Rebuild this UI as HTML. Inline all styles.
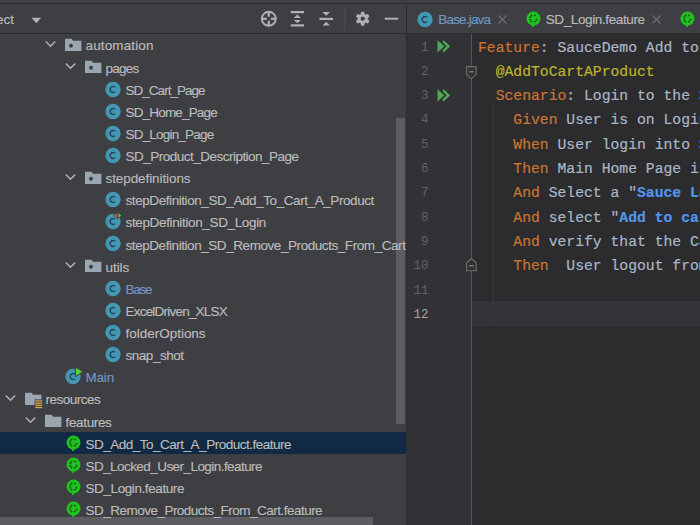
<!DOCTYPE html>
<html><head><meta charset="utf-8"><style>
html,body{margin:0;padding:0;width:700px;height:525px;overflow:hidden;background:#3E3F43}
.ic{position:absolute;overflow:visible}
.t{position:absolute;font-family:"Liberation Sans",sans-serif;font-size:13.5px;line-height:22px;white-space:nowrap;-webkit-text-stroke:0.15px}
.cl{position:absolute;left:478px;font-family:"Liberation Mono",monospace;font-size:14.72px;line-height:24px;white-space:nowrap;-webkit-text-stroke:0.2px}
.ln{position:absolute;left:407px;width:21.5px;text-align:right;font-family:"Liberation Mono",monospace;font-size:12.5px;line-height:24px}
</style></head><body>
<div style="position:absolute;left:0;top:3px;width:700px;height:1px;background:#2D2D30"></div>
<div style="position:absolute;left:0;top:33px;width:700px;height:1px;background:#2D2D30"></div>
<div style="position:absolute;left:406px;top:4px;width:1px;height:521px;background:#2D2D30"></div>
<!-- project header -->

<svg class="ic" style="left:0;top:0" width="700" height="34" viewBox="0 0 700 34">
 <g fill="#AFB1B3">
  <circle cx="268.8" cy="18.8" r="7" fill="none" stroke="#AFB1B3" stroke-width="1.9"/>
  <rect x="267.7" y="11.5" width="2.2" height="5.3"/><rect x="267.7" y="20.8" width="2.2" height="5.3"/>
  <rect x="261.5" y="17.7" width="5.3" height="2.2"/><rect x="270.8" y="17.7" width="5.3" height="2.2"/>
  <rect x="290.8" y="11" width="13.2" height="2.2"/><rect x="290.8" y="24.3" width="13.2" height="2.2"/>
  <path d="M293.8 18 L297.35 14.6 L300.9 18 Z"/><path d="M293.8 19.9 L297.35 23.2 L300.9 19.9 Z"/>
  <rect x="319.4" y="17.8" width="13.6" height="2.2"/>
  <path d="M322.5 12 L329.9 12 L326.2 15.8 Z"/><path d="M322.5 25.6 L329.9 25.6 L326.2 21.8 Z"/>
  <rect x="384.8" y="17.7" width="13.4" height="2"/>
 </g>
 <rect x="344.3" y="8" width="1" height="23" fill="#4E5052"/>
 <g transform="translate(362.7 18.7)">
  <path fill="#AFB1B3" fill-rule="evenodd" d="M-2.03 -4.57 L-1.48 -6.94 L1.48 -6.94 L2.03 -4.57 L2.94 -4.05 L5.28 -4.75 L6.75 -2.19 L4.97 -0.52 L4.97 0.52 L6.75 2.19 L5.28 4.75 L2.94 4.05 L2.03 4.57 L1.48 6.94 L-1.48 6.94 L-2.03 4.57 L-2.94 4.05 L-5.28 4.75 L-6.75 2.19 L-4.97 0.52 L-4.97 -0.52 L-6.75 -2.19 L-5.28 -4.75 L-2.94 -4.05 Z M2.1 0 A2.1 2.1 0 1 0 -2.1 0 A2.1 2.1 0 1 0 2.1 0 Z"/>
 </g>
</svg>

<div class="t" style="right:686px;top:9px;color:#BBBBBB">Project</div>
<svg class="ic" style="left:31px;top:17px" width="11" height="7" viewBox="0 0 11 7"><path d="M0.5 0.8 H10.2 L5.35 6.3 Z" fill="#AFB1B3"/></svg>
<div style="position:absolute;left:396px;top:118px;width:9px;height:306px;background:#5D5D61"></div>
<div style="position:absolute;left:0;top:517px;width:373px;height:8px;background:#5D5D61"></div>
<div id="tree" style="position:absolute;left:0;top:34px;width:406px;height:491px;overflow:hidden">
<div style="position:absolute;left:0;top:-34px;width:406px;height:525px">
<svg class="ic" style="left:45px;top:36.2125px" width="12" height="16" viewBox="0 0 12 16"><path d="M0.8 5.5 L5.5 10.2 L10.2 5.5" fill="none" stroke="#AEB0B2" stroke-width="1.6"/></svg><svg class="ic" style="left:65px;top:36.2125px" width="18" height="18" viewBox="0 0 18 18"><path d="M0 2.8 H6.6 L8 4.7 H16.4 V15.1 H0 Z" fill="#9AA7B0"/><circle cx="6" cy="9.7" r="2" fill="#3E3F43"/></svg><div class="t" style="left:85.5px;top:35.45px;color:#BBBBBB;letter-spacing:0.130px">automation</div><svg class="ic" style="left:65px;top:58.3375px" width="12" height="16" viewBox="0 0 12 16"><path d="M0.8 5.5 L5.5 10.2 L10.2 5.5" fill="none" stroke="#AEB0B2" stroke-width="1.6"/></svg><svg class="ic" style="left:85px;top:58.3375px" width="18" height="18" viewBox="0 0 18 18"><path d="M0 2.8 H6.6 L8 4.7 H16.4 V15.1 H0 Z" fill="#9AA7B0"/><circle cx="6" cy="9.7" r="2" fill="#3E3F43"/></svg><div class="t" style="left:105.5px;top:57.58px;color:#BBBBBB;letter-spacing:-0.739px">pages</div><svg class="ic" style="left:105px;top:80.5625px" width="18" height="18" viewBox="0 0 18 18"><circle cx="8" cy="8.5" r="7.7" fill="#4297B4"/><path d="M10.04 6.34 A2.9 2.9 0 1 0 10.04 10.66" fill="none" stroke="#2D4655" stroke-width="1.4"/></svg><div class="t" style="left:125.5px;top:79.70px;color:#BBBBBB;letter-spacing:-0.976px">SD_Cart_Page</div><svg class="ic" style="left:105px;top:102.6875px" width="18" height="18" viewBox="0 0 18 18"><circle cx="8" cy="8.5" r="7.7" fill="#4297B4"/><path d="M10.04 6.34 A2.9 2.9 0 1 0 10.04 10.66" fill="none" stroke="#2D4655" stroke-width="1.4"/></svg><div class="t" style="left:125.5px;top:101.83px;color:#BBBBBB;letter-spacing:-0.826px">SD_Home_Page</div><svg class="ic" style="left:105px;top:124.8125px" width="18" height="18" viewBox="0 0 18 18"><circle cx="8" cy="8.5" r="7.7" fill="#4297B4"/><path d="M10.04 6.34 A2.9 2.9 0 1 0 10.04 10.66" fill="none" stroke="#2D4655" stroke-width="1.4"/></svg><div class="t" style="left:125.5px;top:123.95px;color:#BBBBBB;letter-spacing:-0.803px">SD_Login_Page</div><svg class="ic" style="left:105px;top:146.9375px" width="18" height="18" viewBox="0 0 18 18"><circle cx="8" cy="8.5" r="7.7" fill="#4297B4"/><path d="M10.04 6.34 A2.9 2.9 0 1 0 10.04 10.66" fill="none" stroke="#2D4655" stroke-width="1.4"/></svg><div class="t" style="left:125.5px;top:146.07px;color:#BBBBBB;letter-spacing:-0.510px">SD_Product_Description_Page</div><svg class="ic" style="left:65px;top:168.9625px" width="12" height="16" viewBox="0 0 12 16"><path d="M0.8 5.5 L5.5 10.2 L10.2 5.5" fill="none" stroke="#AEB0B2" stroke-width="1.6"/></svg><svg class="ic" style="left:85px;top:168.9625px" width="18" height="18" viewBox="0 0 18 18"><path d="M0 2.8 H6.6 L8 4.7 H16.4 V15.1 H0 Z" fill="#9AA7B0"/><circle cx="6" cy="9.7" r="2" fill="#3E3F43"/></svg><div class="t" style="left:105.5px;top:168.20px;color:#BBBBBB;letter-spacing:-0.087px">stepdefinitions</div><svg class="ic" style="left:105px;top:191.1875px" width="18" height="18" viewBox="0 0 18 18"><circle cx="8" cy="8.5" r="7.7" fill="#4297B4"/><path d="M10.04 6.34 A2.9 2.9 0 1 0 10.04 10.66" fill="none" stroke="#2D4655" stroke-width="1.4"/></svg><div class="t" style="left:125.5px;top:190.32px;color:#BBBBBB;letter-spacing:-0.424px">stepDefinition_SD_Add_To_Cart_A_Product</div><svg class="ic" style="left:105px;top:213.3125px" width="18" height="18" viewBox="0 0 18 18"><circle cx="8" cy="8.5" r="7.7" fill="#4297B4"/><path d="M10.04 6.34 A2.9 2.9 0 1 0 10.04 10.66" fill="none" stroke="#2D4655" stroke-width="1.4"/><path d="M12.3 -0.6 L8.6 2.4 L12.3 5.6 Z" fill="#E0652E" stroke="#3E3F43" stroke-width="0.9"/><path d="M12.9 -0.6 L16.8 2.4 L12.9 5.6 Z" fill="#5CC640" stroke="#3E3F43" stroke-width="0.9"/></svg><div class="t" style="left:125.5px;top:212.45px;color:#BBBBBB;letter-spacing:-0.353px">stepDefinition_SD_Login</div><svg class="ic" style="left:105px;top:235.4375px" width="18" height="18" viewBox="0 0 18 18"><circle cx="8" cy="8.5" r="7.7" fill="#4297B4"/><path d="M10.04 6.34 A2.9 2.9 0 1 0 10.04 10.66" fill="none" stroke="#2D4655" stroke-width="1.4"/></svg><div class="t" style="left:125.5px;top:234.57px;color:#BBBBBB;letter-spacing:-0.434px">stepDefinition_SD_Remove_Products_From_Cart</div><svg class="ic" style="left:65px;top:257.4625px" width="12" height="16" viewBox="0 0 12 16"><path d="M0.8 5.5 L5.5 10.2 L10.2 5.5" fill="none" stroke="#AEB0B2" stroke-width="1.6"/></svg><svg class="ic" style="left:85px;top:257.4625px" width="18" height="18" viewBox="0 0 18 18"><path d="M0 2.8 H6.6 L8 4.7 H16.4 V15.1 H0 Z" fill="#9AA7B0"/><circle cx="6" cy="9.7" r="2" fill="#3E3F43"/></svg><div class="t" style="left:105.5px;top:256.70px;color:#BBBBBB;letter-spacing:-0.063px">utils</div><svg class="ic" style="left:105px;top:279.6875px" width="18" height="18" viewBox="0 0 18 18"><circle cx="8" cy="8.5" r="7.7" fill="#4297B4"/><path d="M10.04 6.34 A2.9 2.9 0 1 0 10.04 10.66" fill="none" stroke="#2D4655" stroke-width="1.4"/></svg><div class="t" style="left:125.5px;top:278.82px;color:#7196C4;letter-spacing:-1.220px">Base</div><svg class="ic" style="left:105px;top:301.8125px" width="18" height="18" viewBox="0 0 18 18"><circle cx="8" cy="8.5" r="7.7" fill="#4297B4"/><path d="M10.04 6.34 A2.9 2.9 0 1 0 10.04 10.66" fill="none" stroke="#2D4655" stroke-width="1.4"/></svg><div class="t" style="left:125.5px;top:300.95px;color:#BBBBBB;letter-spacing:-0.785px">ExcelDriven_XLSX</div><svg class="ic" style="left:105px;top:323.9375px" width="18" height="18" viewBox="0 0 18 18"><circle cx="8" cy="8.5" r="7.7" fill="#4297B4"/><path d="M10.04 6.34 A2.9 2.9 0 1 0 10.04 10.66" fill="none" stroke="#2D4655" stroke-width="1.4"/></svg><div class="t" style="left:125.5px;top:323.07px;color:#BBBBBB;letter-spacing:-0.015px">folderOptions</div><svg class="ic" style="left:105px;top:346.0625px" width="18" height="18" viewBox="0 0 18 18"><circle cx="8" cy="8.5" r="7.7" fill="#4297B4"/><path d="M10.04 6.34 A2.9 2.9 0 1 0 10.04 10.66" fill="none" stroke="#2D4655" stroke-width="1.4"/></svg><div class="t" style="left:125.5px;top:345.20px;color:#BBBBBB;letter-spacing:-0.468px">snap_shot</div><svg class="ic" style="left:65px;top:368.1875px" width="18" height="18" viewBox="0 0 18 18"><circle cx="8" cy="8.5" r="7.7" fill="#4297B4"/><path d="M10.04 6.34 A2.9 2.9 0 1 0 10.04 10.66" fill="none" stroke="#2D4655" stroke-width="1.4"/><path d="M10.5 -1 L17.9 3.8 L10.5 8.6 Z" fill="#5FCF3A" stroke="#3E3F43" stroke-width="1" stroke-linejoin="round"/></svg><div class="t" style="left:85.5px;top:367.32px;color:#7196C4;letter-spacing:-0.191px">Main</div><svg class="ic" style="left:5px;top:390.2125px" width="12" height="16" viewBox="0 0 12 16"><path d="M0.8 5.5 L5.5 10.2 L10.2 5.5" fill="none" stroke="#AEB0B2" stroke-width="1.6"/></svg><svg class="ic" style="left:25px;top:390.2125px" width="18" height="18" viewBox="0 0 18 18"><path d="M0 2.8 H6.6 L8 4.7 H16.4 V15.1 H0 Z" fill="#9AA7B0"/><rect x="9.6" y="9.4" width="8" height="9" fill="#3E3F43"/><rect x="10.2" y="10.3" width="7" height="1.25" fill="#E0A640"/><rect x="10.2" y="12.5" width="7" height="1.25" fill="#E0A640"/><rect x="10.2" y="14.700000000000001" width="7" height="1.25" fill="#E0A640"/><rect x="10.2" y="16.900000000000002" width="7" height="1.25" fill="#E0A640"/></svg><div class="t" style="left:45.5px;top:389.45px;color:#BBBBBB;letter-spacing:-0.498px">resources</div><svg class="ic" style="left:25px;top:412.3375px" width="12" height="16" viewBox="0 0 12 16"><path d="M0.8 5.5 L5.5 10.2 L10.2 5.5" fill="none" stroke="#AEB0B2" stroke-width="1.6"/></svg><svg class="ic" style="left:45px;top:412.3375px" width="18" height="18" viewBox="0 0 18 18"><path d="M0 2.8 H6.6 L8 4.7 H16.4 V15.1 H0 Z" fill="#9AA7B0"/></svg><div class="t" style="left:65.5px;top:411.57px;color:#BBBBBB;letter-spacing:-0.348px">features</div><div style="position:absolute;left:0;top:432px;width:406px;height:22px;background:#112942"></div><svg class="ic" style="left:65.5px;top:434.5625px" width="18" height="18" viewBox="0 0 18 18"><circle cx="7.5" cy="7.6" r="7" fill="#1EC41E"/><path d="M4.6 13 L7 16.4 L9.6 13 Z" fill="#1EC41E"/><circle cx="5.6" cy="4.4" r="0.95" fill="#1E4A22"/><circle cx="8.9" cy="4.4" r="0.95" fill="#1E4A22"/><circle cx="4.3" cy="6.2" r="0.95" fill="#1E4A22"/><circle cx="4.3" cy="8.8" r="0.95" fill="#1E4A22"/><circle cx="10.5" cy="8.8" r="0.95" fill="#1E4A22"/><circle cx="5.6" cy="10.6" r="0.95" fill="#1E4A22"/><circle cx="8.9" cy="10.6" r="0.95" fill="#1E4A22"/></svg><div class="t" style="left:85.5px;top:433.70px;color:#BBBBBB;letter-spacing:-0.497px">SD_Add_To_Cart_A_Product.feature</div><svg class="ic" style="left:65.5px;top:456.6875px" width="18" height="18" viewBox="0 0 18 18"><circle cx="7.5" cy="7.6" r="7" fill="#1EC41E"/><path d="M4.6 13 L7 16.4 L9.6 13 Z" fill="#1EC41E"/><circle cx="5.6" cy="4.4" r="0.95" fill="#1E4A22"/><circle cx="8.9" cy="4.4" r="0.95" fill="#1E4A22"/><circle cx="4.3" cy="6.2" r="0.95" fill="#1E4A22"/><circle cx="4.3" cy="8.8" r="0.95" fill="#1E4A22"/><circle cx="10.5" cy="8.8" r="0.95" fill="#1E4A22"/><circle cx="5.6" cy="10.6" r="0.95" fill="#1E4A22"/><circle cx="8.9" cy="10.6" r="0.95" fill="#1E4A22"/></svg><div class="t" style="left:85.5px;top:455.82px;color:#BBBBBB;letter-spacing:-0.558px">SD_Locked_User_Login.feature</div><svg class="ic" style="left:65.5px;top:478.8125px" width="18" height="18" viewBox="0 0 18 18"><circle cx="7.5" cy="7.6" r="7" fill="#1EC41E"/><path d="M4.6 13 L7 16.4 L9.6 13 Z" fill="#1EC41E"/><circle cx="5.6" cy="4.4" r="0.95" fill="#1E4A22"/><circle cx="8.9" cy="4.4" r="0.95" fill="#1E4A22"/><circle cx="4.3" cy="6.2" r="0.95" fill="#1E4A22"/><circle cx="4.3" cy="8.8" r="0.95" fill="#1E4A22"/><circle cx="10.5" cy="8.8" r="0.95" fill="#1E4A22"/><circle cx="5.6" cy="10.6" r="0.95" fill="#1E4A22"/><circle cx="8.9" cy="10.6" r="0.95" fill="#1E4A22"/></svg><div class="t" style="left:85.5px;top:477.95px;color:#BBBBBB;letter-spacing:-0.411px">SD_Login.feature</div><svg class="ic" style="left:65.5px;top:500.9375px" width="18" height="18" viewBox="0 0 18 18"><circle cx="7.5" cy="7.6" r="7" fill="#1EC41E"/><path d="M4.6 13 L7 16.4 L9.6 13 Z" fill="#1EC41E"/><circle cx="5.6" cy="4.4" r="0.95" fill="#1E4A22"/><circle cx="8.9" cy="4.4" r="0.95" fill="#1E4A22"/><circle cx="4.3" cy="6.2" r="0.95" fill="#1E4A22"/><circle cx="4.3" cy="8.8" r="0.95" fill="#1E4A22"/><circle cx="10.5" cy="8.8" r="0.95" fill="#1E4A22"/><circle cx="5.6" cy="10.6" r="0.95" fill="#1E4A22"/><circle cx="8.9" cy="10.6" r="0.95" fill="#1E4A22"/></svg><div class="t" style="left:85.5px;top:500.07px;color:#BBBBBB;letter-spacing:-0.514px">SD_Remove_Products_From_Cart.feature</div>
</div></div>
<svg class="ic" style="left:417px;top:10.8px" width="18" height="18" viewBox="0 0 18 18"><circle cx="8" cy="8.5" r="7.7" fill="#4297B4"/><path d="M10.04 6.34 A2.9 2.9 0 1 0 10.04 10.66" fill="none" stroke="#2D4655" stroke-width="1.4"/></svg><div class="t" style="left:438.3px;top:9px;color:#7196C4;letter-spacing:-0.822px">Base.java</div><svg class="ic" style="left:498.3px;top:14.6px" width="9" height="9" viewBox="0 0 9 9"><path d="M0.5 0.5 L8.5 8.5 M8.5 0.5 L0.5 8.5" stroke="#6B6D6F" stroke-width="1.2"/></svg><svg class="ic" style="left:525.5px;top:11px" width="18" height="18" viewBox="0 0 18 18"><circle cx="7.5" cy="7.6" r="7" fill="#1EC41E"/><path d="M4.6 13 L7 16.4 L9.6 13 Z" fill="#1EC41E"/><circle cx="5.6" cy="4.4" r="0.95" fill="#1E4A22"/><circle cx="8.9" cy="4.4" r="0.95" fill="#1E4A22"/><circle cx="4.3" cy="6.2" r="0.95" fill="#1E4A22"/><circle cx="4.3" cy="8.8" r="0.95" fill="#1E4A22"/><circle cx="10.5" cy="8.8" r="0.95" fill="#1E4A22"/><circle cx="5.6" cy="10.6" r="0.95" fill="#1E4A22"/><circle cx="8.9" cy="10.6" r="0.95" fill="#1E4A22"/></svg><div class="t" style="left:545.7px;top:9px;color:#BBBBBB;letter-spacing:-0.380px">SD_Login.feature</div><svg class="ic" style="left:652.3px;top:14.6px" width="9" height="9" viewBox="0 0 9 9"><path d="M0.5 0.5 L8.5 8.5 M8.5 0.5 L0.5 8.5" stroke="#6B6D6F" stroke-width="1.2"/></svg><svg class="ic" style="left:679.5px;top:11px" width="18" height="18" viewBox="0 0 18 18"><circle cx="7.5" cy="7.6" r="7" fill="#1EC41E"/><path d="M4.6 13 L7 16.4 L9.6 13 Z" fill="#1EC41E"/><circle cx="5.6" cy="4.4" r="0.95" fill="#1E4A22"/><circle cx="8.9" cy="4.4" r="0.95" fill="#1E4A22"/><circle cx="4.3" cy="6.2" r="0.95" fill="#1E4A22"/><circle cx="4.3" cy="8.8" r="0.95" fill="#1E4A22"/><circle cx="10.5" cy="8.8" r="0.95" fill="#1E4A22"/><circle cx="5.6" cy="10.6" r="0.95" fill="#1E4A22"/><circle cx="8.9" cy="10.6" r="0.95" fill="#1E4A22"/></svg>
<!-- editor -->
<div style="position:absolute;left:407px;top:34px;width:293px;height:491px;background:#2C2B2E;overflow:hidden">
<div style="position:absolute;left:0;top:-34px;width:293px;height:525px">
<div style="position:absolute;left:0;top:34px;width:65px;height:491px;background:#323236"></div>
<div style="position:absolute;left:65px;top:301px;width:228px;height:24.5px;background:#343337"></div>
<div style="position:absolute;left:86px;top:105px;width:1px;height:220px;background:#393939"></div>
<div style="position:absolute;left:64px;top:34px;width:1px;height:491px;background:#555555"></div>
<div style="position:absolute;left:-407px;top:0;width:700px;height:525px">
<div class="cl" style="top:35.50px"><span style="color:#C97631">Feature</span><span style="color:#A9B7C6">:&nbsp;SauceDemo&nbsp;Add&nbsp;to&nbsp;the&nbsp;cart</span></div><div class="ln" style="top:35.50px;color:#606366">1</div><div class="cl" style="top:59.82px"><span style="color:#BBB529">&nbsp;&nbsp;@AddToCartAProduct</span></div><div class="ln" style="top:59.82px;color:#606366">2</div><div class="cl" style="top:84.14px"><span style="color:#C97631">&nbsp;&nbsp;Scenario</span><span style="color:#A9B7C6">:&nbsp;Login&nbsp;to&nbsp;the&nbsp;</span><span style="color:#5394EC">Sauce</span></div><div class="ln" style="top:84.14px;color:#606366">3</div><div class="cl" style="top:108.46px"><span style="color:#C97631">&nbsp;&nbsp;&nbsp;&nbsp;Given</span><span style="color:#A9B7C6">&nbsp;User&nbsp;is&nbsp;on&nbsp;Login&nbsp;Page</span></div><div class="ln" style="top:108.46px;color:#606366">4</div><div class="cl" style="top:132.78px"><span style="color:#C97631">&nbsp;&nbsp;&nbsp;&nbsp;When</span><span style="color:#A9B7C6">&nbsp;User&nbsp;login&nbsp;into&nbsp;</span><span style="color:#5394EC">Sauce</span></div><div class="ln" style="top:132.78px;color:#606366">5</div><div class="cl" style="top:157.10px"><span style="color:#C97631">&nbsp;&nbsp;&nbsp;&nbsp;Then</span><span style="color:#A9B7C6">&nbsp;Main&nbsp;Home&nbsp;Page&nbsp;is</span></div><div class="ln" style="top:157.10px;color:#606366">6</div><div class="cl" style="top:181.42px"><span style="color:#C97631">&nbsp;&nbsp;&nbsp;&nbsp;And</span><span style="color:#A9B7C6">&nbsp;Select&nbsp;a&nbsp;&quot;</span><span style="color:#5394EC;font-weight:bold">Sauce&nbsp;Labs</span></div><div class="ln" style="top:181.42px;color:#606366">7</div><div class="cl" style="top:205.74px"><span style="color:#C97631">&nbsp;&nbsp;&nbsp;&nbsp;And</span><span style="color:#A9B7C6">&nbsp;select&nbsp;&quot;</span><span style="color:#5394EC;font-weight:bold">Add&nbsp;to&nbsp;cart</span></div><div class="ln" style="top:205.74px;color:#606366">8</div><div class="cl" style="top:230.06px"><span style="color:#C97631">&nbsp;&nbsp;&nbsp;&nbsp;And</span><span style="color:#A9B7C6">&nbsp;verify&nbsp;that&nbsp;the&nbsp;Cart</span></div><div class="ln" style="top:230.06px;color:#606366">9</div><div class="cl" style="top:254.38px"><span style="color:#C97631">&nbsp;&nbsp;&nbsp;&nbsp;Then</span><span style="color:#A9B7C6">&nbsp;&nbsp;User&nbsp;logout&nbsp;from</span></div><div class="ln" style="top:254.38px;color:#606366">10</div><div class="cl" style="top:278.70px"></div><div class="ln" style="top:278.70px;color:#606366">11</div><div class="cl" style="top:303.02px"></div><div class="ln" style="top:303.02px;color:#A4A3A3">12</div>
<svg class="ic" style="left:437px;top:40.3px" width="14" height="13" viewBox="0 0 14 13"><path d="M0.5 0.2 L7.4 6.3 L0.5 12.4 Z" fill="#4FA657"/><path d="M6.6 0.2 L13.2 6.3 L6.6 12.4 L5.4 10.4 L9.6 6.3 L5.4 2.2 Z" fill="#4FA657"/></svg>
<svg class="ic" style="left:466px;top:66px" width="11" height="14" viewBox="0 0 11 14"><path d="M0.6 0.6 H10.2 V8.6 L5.4 12.8 L0.6 8.6 Z" fill="#323236" stroke="#6E6E6E" stroke-width="1.1"/><rect x="3.2" y="5.2" width="4.4" height="1.2" fill="#8A8A8A"/></svg>
<svg class="ic" style="left:466px;top:257.5px" width="11" height="14" viewBox="0 0 11 14"><path d="M0.6 12.8 H10.2 V4.8 L5.4 0.6 L0.6 4.8 Z" fill="#323236" stroke="#6E6E6E" stroke-width="1.1"/><rect x="3.2" y="7.2" width="4.4" height="1.2" fill="#8A8A8A"/></svg>
<svg class="ic" style="left:437px;top:89px" width="14" height="13" viewBox="0 0 14 13"><path d="M0.5 0.2 L7.4 6.3 L0.5 12.4 Z" fill="#4FA657"/><path d="M6.6 0.2 L13.2 6.3 L6.6 12.4 L5.4 10.4 L9.6 6.3 L5.4 2.2 Z" fill="#4FA657"/></svg>
</div>
</div></div>
</body></html>
